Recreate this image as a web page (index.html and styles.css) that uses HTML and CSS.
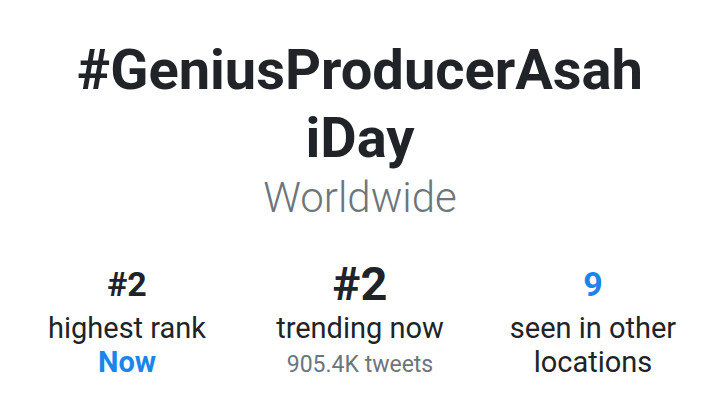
FILE: index.html
```html
<!DOCTYPE html>
<html>
<head>
<meta charset="utf-8">
<link rel="stylesheet" href="styles.css">
</head>
<body>
<main class="page">
  <header class="head">
    <h1 class="title">#GeniusProducerAsahiDay</h1>
    <div class="place">Worldwide</div>
  </header>
  <section class="stats">
    <div class="stat">
      <div class="num">#2</div>
      <div class="label">highest rank</div>
      <div class="sub blue">Now</div>
    </div>
    <div class="stat">
      <div class="num big">#2</div>
      <div class="label">trending now</div>
      <div class="small">905.4K tweets</div>
    </div>
    <div class="stat">
      <div class="num blue">9</div>
      <div class="label">seen in other locations</div>
    </div>
  </section>
</main>
</body>
</html>
```
FILE: styles.css
```css
html, body {
  margin: 0;
  padding: 0;
  background: #ffffff;
}
body {
  font-family: Roboto, "Liberation Sans", sans-serif;
  color: #202327;
}
.page {
  width: 720px;
  height: 405px;
  display: flex;
  flex-direction: column;
  align-items: center;
  padding-top: 36px;
  box-sizing: border-box;
}
.head {
  display: flex;
  flex-direction: column;
  align-items: center;
  text-align: center;
}
.title {
  width: 574px;
  margin: 0;
  font-size: 56px;
  font-weight: 700;
  line-height: 68.4px;
  word-break: break-all;
  color: #202327;
}
.place {
  font-size: 42px;
  font-weight: 300;
  color: #6d757c;
  line-height: 48px;
  margin-top: 1px;
}
.stats {
  display: grid;
  grid-template-columns: repeat(3, 233px);
  margin-top: 40px;
  text-align: center;
}
.stat {
  display: flex;
  flex-direction: column;
  align-items: center;
  padding: 0 26px;
}
.num {
  font-size: 34px;
  font-weight: 700;
  line-height: 44px;
  height: 44px;
}
.num.big {
  font-size: 47px;
}
.label {
  font-size: 29px;
  line-height: 34px;
  margin-top: 5px;
}
.sub {
  font-size: 29px;
  font-weight: 700;
  line-height: 34px;
}
.small {
  font-size: 23px;
  line-height: 44px;
  margin-top: -2px;
  color: #6d757c;
}
.blue {
  color: #1a86ea;
}
```
